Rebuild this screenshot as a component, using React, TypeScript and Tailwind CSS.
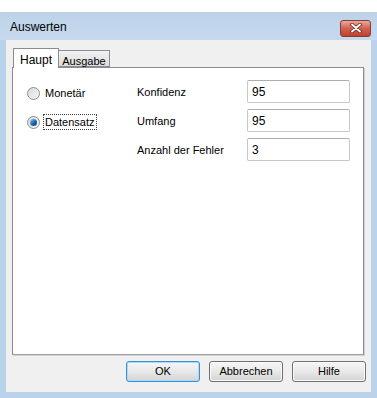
import { useState } from 'react';

const font = { fontFamily: '"Liberation Sans", Arial, sans-serif' };

function Radio({ checked, label, focused, onClick }: { checked: boolean; label: string; focused?: boolean; onClick: () => void }) {
  return (
    <div className="flex items-center gap-[4px] cursor-default" onClick={onClick}>
      <span className="w-[13px] h-[13px] rounded-full border border-[#8e8f8f] bg-gradient-to-br from-[#d8d8d8] to-[#f8f8f8] flex items-center justify-center">
        {checked && (
          <span className="w-[7px] h-[7px] rounded-full bg-gradient-to-br from-[#8ad0f8] via-[#1e6fb8] to-[#0c3f7a]" />
        )}
      </span>
      <span className={`px-[1px] leading-[14px] ${focused ? 'outline outline-1 outline-dotted outline-[#444]' : ''}`}>{label}</span>
    </div>
  );
}

function Field({ value }: { value: string }) {
  return (
    <div className="h-[23px] w-[103px] border border-[#c5c8cc] border-t-[#abadb3] rounded-[2px] bg-white flex items-center px-[4px] text-[12px] text-black">
      {value}
    </div>
  );
}

function Btn({ label, primary }: { label: string; primary?: boolean }) {
  return (
    <button
      className={`h-[21px] w-[74px] rounded-[3px] border text-[11px] text-black bg-gradient-to-b from-[#f6f6f6] via-[#e8e8e8] to-[#d4d4d4] ${
        primary ? 'border-[#3c8fd6] shadow-[inset_0_0_0_1px_#a8dcf8]' : 'border-[#707070] shadow-[inset_0_0_0_1px_#fbfbfb]'
      }`}
    >
      {label}
    </button>
  );
}

export default function App() {
  const [mode, setMode] = useState<'m' | 'd'>('d');

  return (
    <div className="w-[377px] h-[398px] bg-white flex flex-col pt-[12px]" style={font}>
      <div className="flex-1 flex flex-col bg-[#bad2ea] rounded-tl-[6px] px-[6px] pb-[6px]">
        <div className="h-[28px] flex items-center justify-between bg-gradient-to-b from-[#bdd2e9] to-[#c6d9ee] -mx-[6px] pl-[10px] pr-[6px]">
          <span className="text-[12px] text-black mt-[2px]">Auswerten</span>
          <div className="w-[31px] h-[17px] mt-[4px] rounded-[3px] border border-[#8a3a2f] bg-gradient-to-b from-[#e7a99c] via-[#d0614f] to-[#c0402b] flex items-center justify-center">
            <svg width="12" height="10" viewBox="0 0 12 10">
              <path d="M2 1.5 L10 8.5 M10 1.5 L2 8.5" stroke="#6b2219" strokeWidth="3.6" strokeLinecap="round" />
              <path d="M2 1.5 L10 8.5 M10 1.5 L2 8.5" stroke="#ffffff" strokeWidth="2" strokeLinecap="round" />
            </svg>
          </div>
        </div>

        <div className="flex-1 flex flex-col bg-[#f0f0f0] pl-[6px] pr-[7px] pt-[8px] pb-[9px] text-[11px] text-black">
          <div className="flex items-end pl-[1px] h-[20px] relative z-10">
            <div className="h-[20px] w-[46px] bg-white border border-[#898c95] border-b-0 flex items-start justify-center pt-[2px] text-[12px]">Haupt</div>
            <div className="h-[17px] w-[51px] mb-[1px] bg-gradient-to-b from-[#f2f2f2] to-[#dcdcdc] border border-[#898c95] border-l-0 flex items-start justify-center pt-[2px]">Ausgabe</div>
          </div>
          <div className="-mt-[1px] h-[288px] bg-white border border-[#898c95] border-b-[#a0a0a0] shadow-[1px_1px_0_#cfd1d6] pl-[14px] pt-[12px]">
            <div className="grid grid-cols-[110px_110px_103px] auto-rows-[23px] gap-y-[6px] items-center">
              <div className="mt-[3px]"><Radio checked={mode === 'm'} label="Monetär" onClick={() => setMode('m')} /></div>
              <div className="mt-[2px]">Konfidenz</div>
              <Field value="95" />
              <div className="mt-[3px]"><Radio checked={mode === 'd'} label="Datensatz" focused onClick={() => setMode('d')} /></div>
              <div className="mt-[2px]">Umfang</div>
              <Field value="95" />
              <div />
              <div className="mt-[1px]">Anzahl der Fehler</div>
              <Field value="3" />
            </div>
          </div>
          <div className="flex-1 flex items-end justify-end gap-[9px] -mr-[2px] pb-[1px]">
            <Btn label="OK" primary />
            <Btn label="Abbrechen" />
            <Btn label="Hilfe" />
          </div>
        </div>
      </div>
    </div>
  );
}
